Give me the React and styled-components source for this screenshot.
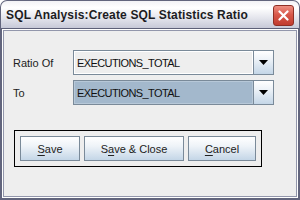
import styled, { createGlobalStyle } from "styled-components";

const GlobalStyle = createGlobalStyle`
  html, body {
    margin: 0;
    padding: 0;
    background: #ffffff;
  }
  body {
    font-family: "Liberation Sans", Arial, sans-serif;
  }
`;

const Window = styled.div`
  width: 300px;
  height: 200px;
  box-sizing: border-box;
  display: flex;
  flex-direction: column;
  background: #62657d;
  border-radius: 7px 7px 0 0;
  overflow: hidden;
`;

const TitleBar = styled.div`
  height: 28px;
  box-sizing: border-box;
  margin: 1px 1px 0 1px;
  border-radius: 6px 6px 0 0;
  display: flex;
  align-items: center;
  justify-content: space-between;
  padding: 0 5px 0 5px;
  background: linear-gradient(#f2f2f5 0%, #ffffff 25%, #e6e7ee 60%, #c7c9d8 100%);
  border-bottom: 1px solid #5d6078;
`;

const Title = styled.div`
  font-size: 12px;
  font-weight: bold;
  letter-spacing: 0.15px;
  color: #1c1c22;
  padding-top: 1px;
`;

const CloseButton = styled.div`
  width: 21px;
  height: 21px;
  box-sizing: border-box;
  border: 1px solid #8e2f25;
  border-radius: 3px;
  background: linear-gradient(#ee8f82 0%, #d8584a 45%, #c13c2f 100%);
  display: flex;
  align-items: center;
  justify-content: center;
  margin-top: 2px;
`;

const Frame = styled.div`
  flex: 1;
  margin: 0 2px 2px 2px;
  border: 1px solid #ffffff;
  display: flex;
`;

const Content = styled.div`
  flex: 1;
  border: 1px solid #9296ab;
  background: #eeeeee;
  padding: 19px 0 0 8px;
  display: flex;
  flex-direction: column;
`;

const Rows = styled.div`
  display: flex;
  flex-direction: column;
  gap: 5px;
`;

const Row = styled.div`
  display: flex;
  align-items: center;
  height: 25px;
`;

const Label = styled.div`
  width: 60px;
  font-size: 11px;
  color: #222222;
  padding-left: 1px;
`;

const Combo = styled.div`
  width: 201px;
  height: 25px;
  box-sizing: border-box;
  border: 1px solid #7a8a99;
  display: flex;
`;

const Field = styled.div`
  flex: 1;
  display: flex;
  align-items: center;
  padding-left: 3px;
  font-size: 11px;
  letter-spacing: -0.6px;
  color: #111111;
  background: ${(p) => (p.selected ? "#a3b8cc" : "#eeeeee")};
  box-shadow: inset 1px 1px 0 ${(p) => (p.selected ? "#b7c8d8" : "#ffffff")},
    inset -1px -1px 0 ${(p) => (p.selected ? "#b7c8d8" : "#ffffff")};
  border-right: 1px solid #7a8a99;
`;

const ArrowButton = styled.div`
  width: 19px;
  display: flex;
  align-items: center;
  justify-content: center;
  background: linear-gradient(#ffffff 0%, #eef3f8 35%, #c4d6e7 100%);
`;

const ButtonPanel = styled.div`
  align-self: flex-start;
  margin: 25px 0 0 2px;
  border: 1px solid #000000;
  padding: 5px;
  display: flex;
  gap: 4px;
`;

const Button = styled.div`
  width: ${(p) => p.w}px;
  height: 25px;
  box-sizing: border-box;
  border: 1px solid #7a8a99;
  background: linear-gradient(#ffffff 0%, #eef3f8 40%, #c4d6e7 100%);
  display: flex;
  align-items: center;
  justify-content: center;
  font-size: 11px;
  color: #222222;
`;

const Mnemonic = styled.span`
  text-decoration: underline;
  text-underline-offset: 2px;
`;

const DownArrow = () => (
  <svg width="9" height="5" viewBox="0 0 9 5">
    <path d="M0 0H9L4.5 5Z" fill="#000" />
  </svg>
);

const CloseX = () => (
  <svg width="11" height="11" viewBox="0 0 11 11">
    <path
      d="M1.5 1.5L9.5 9.5M9.5 1.5L1.5 9.5"
      stroke="#fff"
      strokeWidth="2.2"
      strokeLinecap="round"
    />
  </svg>
);

const App = () => {
  return (
    <>
      <GlobalStyle />
      <Window>
        <TitleBar>
          <Title>SQL Analysis:Create SQL Statistics Ratio</Title>
          <CloseButton>
            <CloseX />
          </CloseButton>
        </TitleBar>
        <Frame>
          <Content>
            <Rows>
              <Row>
                <Label>Ratio Of</Label>
                <Combo>
                  <Field>EXECUTIONS_TOTAL</Field>
                  <ArrowButton>
                    <DownArrow />
                  </ArrowButton>
                </Combo>
              </Row>
              <Row>
                <Label>To</Label>
                <Combo>
                  <Field selected>EXECUTIONS_TOTAL</Field>
                  <ArrowButton>
                    <DownArrow />
                  </ArrowButton>
                </Combo>
              </Row>
            </Rows>
            <ButtonPanel>
              <Button w={60}>
                <Mnemonic>S</Mnemonic>ave
              </Button>
              <Button w={100}>
                S<Mnemonic>a</Mnemonic>ve &amp; Close
              </Button>
              <Button w={68}>
                <Mnemonic>C</Mnemonic>ancel
              </Button>
            </ButtonPanel>
          </Content>
        </Frame>
      </Window>
    </>
  );
};

export default App;
